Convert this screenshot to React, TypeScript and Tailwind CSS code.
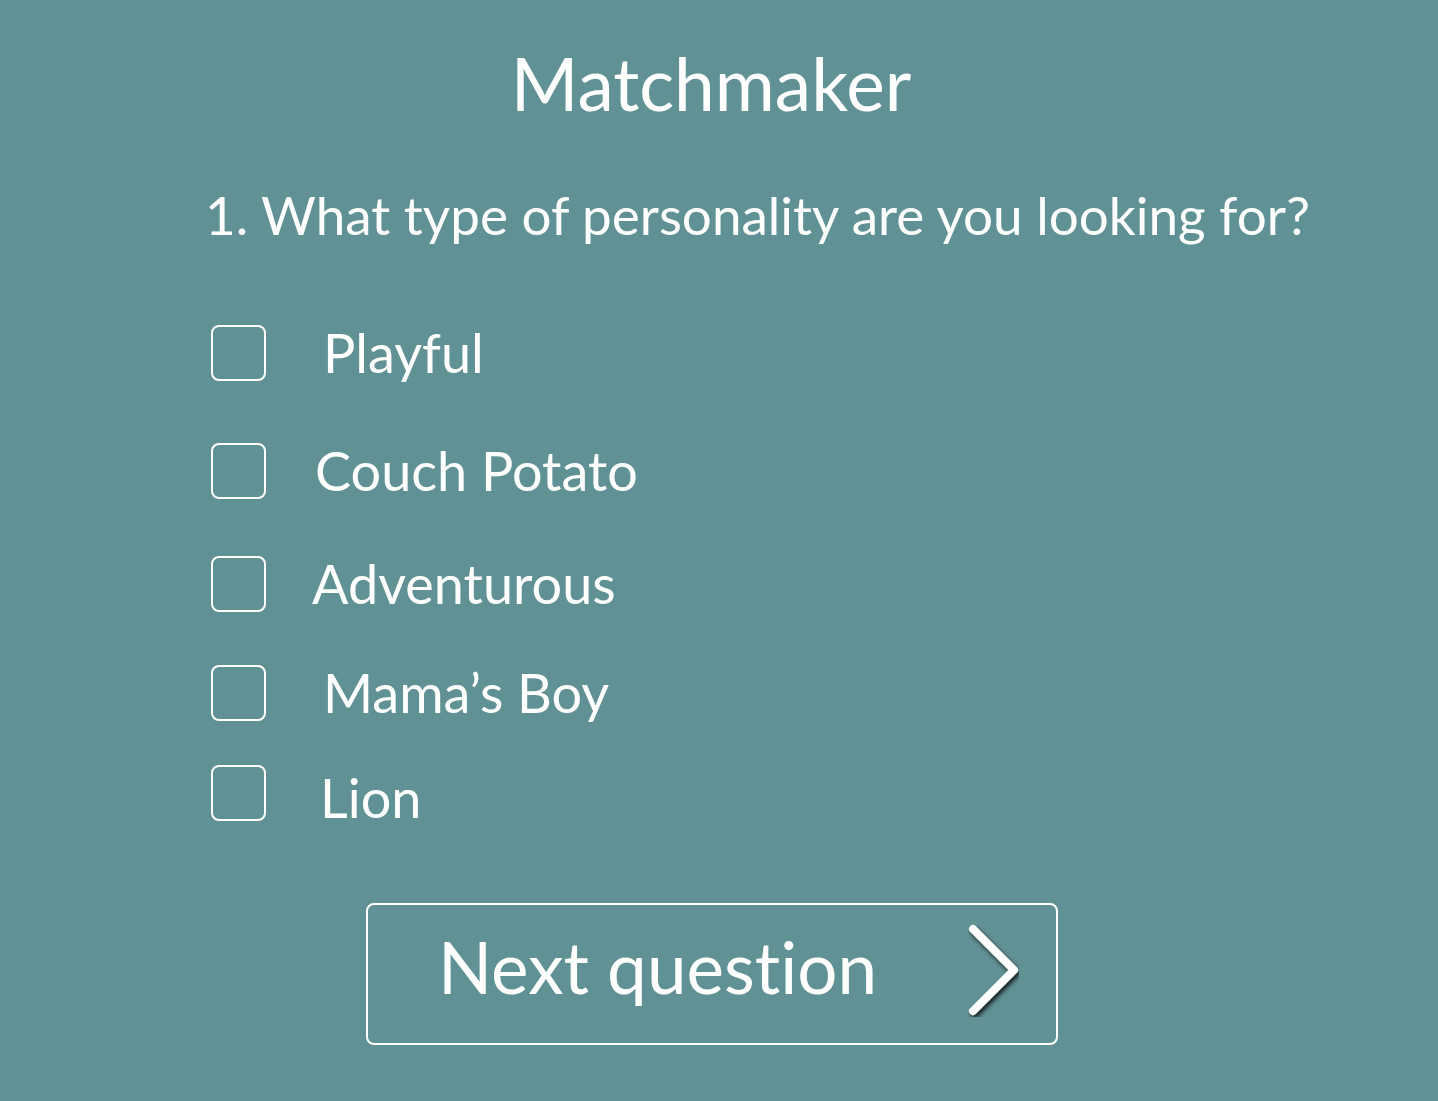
const options = [
  { id: "playful", label: "Playful", row: "mt-[70px]", gap: "pl-[57px]" },
  { id: "couch", label: "Couch Potato", row: "mt-[62px]", gap: "pl-[49px]" },
  { id: "adventurous", label: "Adventurous", row: "mt-[57px]", gap: "pl-[46px]" },
  { id: "mama", label: "Mama’s Boy", row: "mt-[53px]", gap: "pl-[57px]" },
  { id: "lion", label: "Lion", row: "mt-[44px]", gap: "pl-[54px] pt-2.5" },
];

export default function App() {
  return (
    <main className="min-h-screen bg-[#609194] pt-[38px] pb-14 font-['Lato',sans-serif] text-white [font-variant-ligatures:none]">
      <h1 className="pr-4 text-center text-[73px] leading-[90px]">Matchmaker</h1>
      <form className="pt-[47px] pl-[211px]">
        <fieldset>
          <legend className="-ml-[6px] whitespace-nowrap text-[53px] leading-[80px]">
            1. What type of personality are you looking for?
          </legend>
          {options.map((o) => (
            <div key={o.id} className={`flex h-14 items-center ${o.row}`}>
              <input
                id={o.id}
                type="checkbox"
                className="h-14 w-[55px] shrink-0 appearance-none rounded-lg border-2 border-white checked:bg-white"
              />
              <label htmlFor={o.id} className={`text-[54px] leading-[56px] ${o.gap}`}>
                {o.label}
              </label>
            </div>
          ))}
        </fieldset>
      </form>
      <div className="mt-[82px] flex justify-center pr-[14px]">
        <button
          type="button"
          className="flex h-[142px] w-[692px] items-center justify-between rounded-lg border-2 border-white pr-[37px] pb-2 pl-[70px] text-[71px] leading-[90px]"
        >
          <span className="pb-1.5">Next question</span>
          <svg className="h-[93px] w-[51px]" viewBox="0 0 51 93" fill="none" aria-hidden="true">
            <defs>
              <filter id="shade" x="-20%" y="-20%" width="150%" height="150%">
                <feDropShadow dx="2" dy="3" stdDeviation="2" floodColor="#000" floodOpacity="0.8" />
              </filter>
            </defs>
            <path
              d="M5 5L46 46L5 87"
              stroke="white"
              strokeWidth="8"
              strokeLinecap="round"
              strokeLinejoin="round"
              filter="url(#shade)"
            />
          </svg>
        </button>
      </div>
    </main>
  );
}
